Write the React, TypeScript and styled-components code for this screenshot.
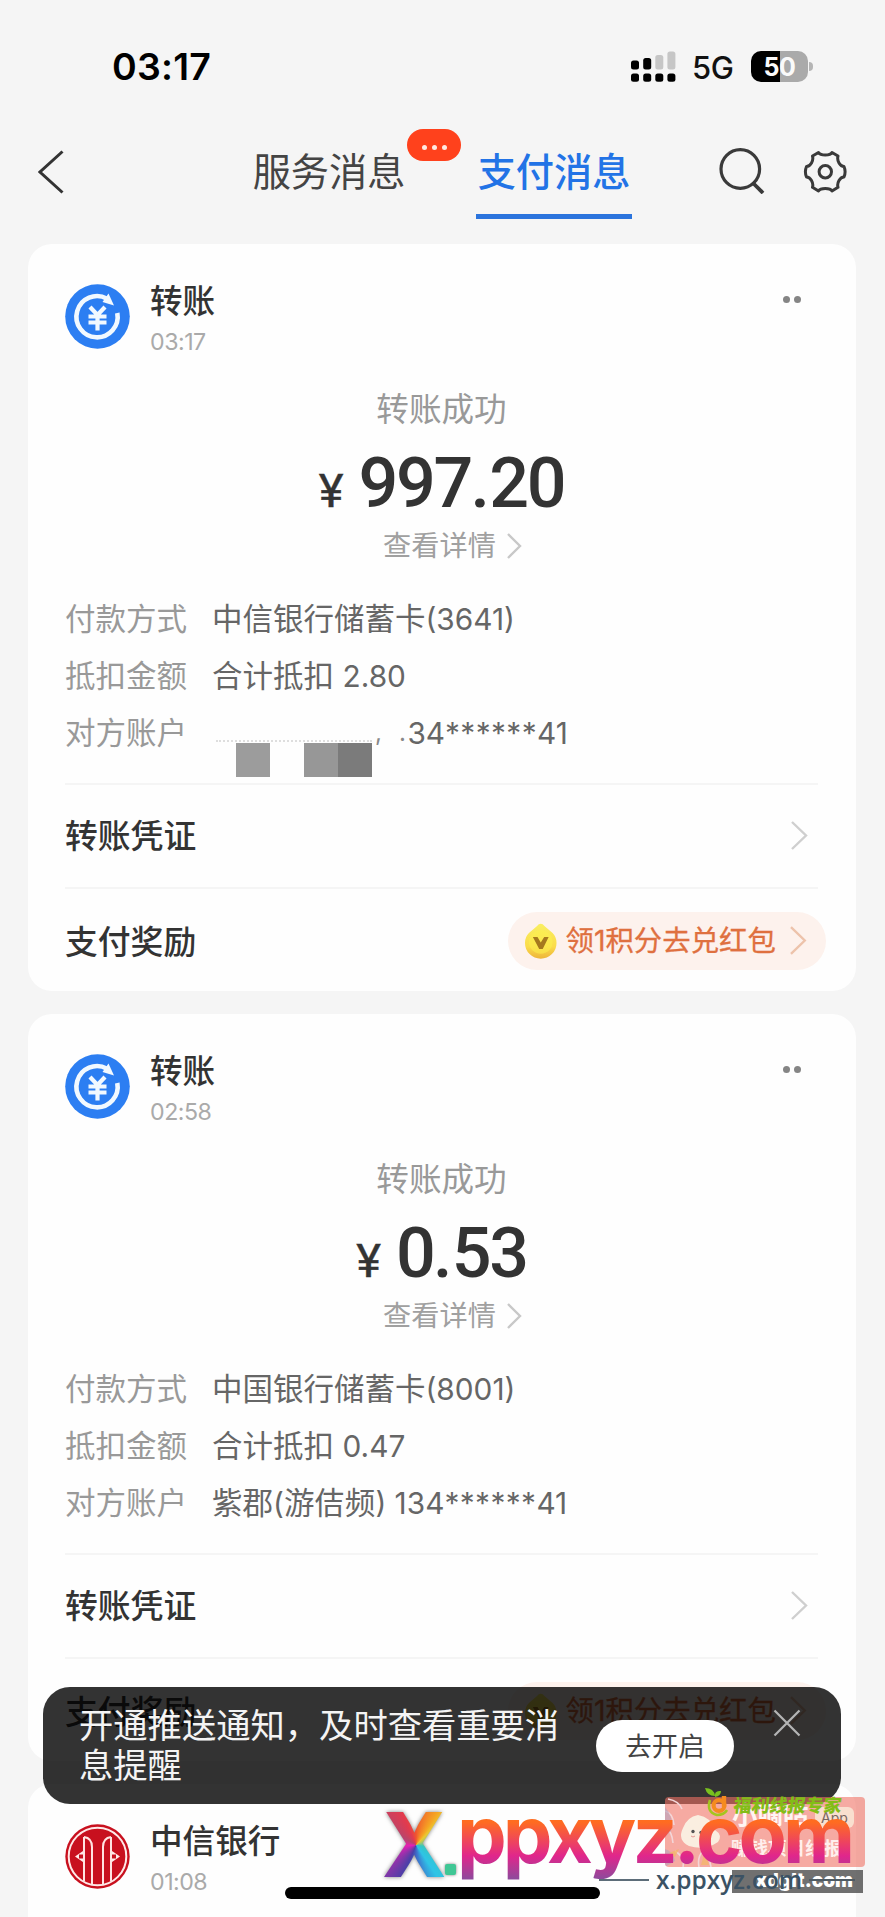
import React from "react";
import styled, { createGlobalStyle } from "styled-components";

const Global = createGlobalStyle`
  * { box-sizing: border-box; }
  body { margin: 0; background: #f5f5f5; }
`;

const Screen = styled.div`
  position: relative;
  width: 885px;
  height: 1917px;
  overflow: hidden;
  background: #f5f5f5;
  font-family: Inter, "Noto Sans CJK SC", sans-serif;
  color: #333;
`;

const StatusBar = styled.div`
  display: flex;
  align-items: center;
  height: 132px;
  padding: 0 72px 0 112px;
`;
const Clock = styled.div`
  flex: 1;
  font-size: 37.5px;
  font-weight: 600;
  letter-spacing: 0.2px;
  color: #000;
`;
const Signal = styled.svg`
  display: block;
  margin-right: 16px;
`;
const Network = styled.div`
  width: 59px;
  padding-top: 2px;
  font-size: 31px;
  font-weight: 500;
  letter-spacing: -0.4px;
  color: #111;
`;
const Battery = styled.div`
  display: flex;
  align-items: center;
  justify-content: center;
  width: 57px;
  height: 31px;
  padding-top: 1px;
  border-radius: 10px;
  background: linear-gradient(90deg, #000 51%, #aaa 51%);
  color: #fafafa;
  font-size: 25px;
  font-weight: 700;
  letter-spacing: -0.5px;
`;
const BatteryTip = styled.div`
  width: 4px;
  height: 9px;
  margin-left: 1px;
  border-radius: 0 4px 4px 0;
  background: #b5b5b5;
`;
const StatusIcons = styled.div`
  display: flex;
  align-items: center;
`;

const Nav = styled.div`
  display: flex;
  height: 112px;
  margin-top: -24px;
  padding: 24px 38px 0;
`;
const BackIcon = styled.svg`
  margin: 18px 0 0 0;
`;
const Tabs = styled.div`
  display: flex;
  margin-left: 187px;
`;
const Tab = styled.div<{ $active?: boolean }>`
  position: relative;
  width: 156px;
  height: 87px;
  margin-right: ${(p) => (p.$active ? 0 : 69)}px;
  font-size: 38.2px;
  line-height: 81px;
  text-align: center;
  white-space: nowrap;
  font-weight: ${(p) => (p.$active ? 500 : 400)};
  color: ${(p) => (p.$active ? "#2273e6" : "#444")};
  border-bottom: ${(p) => (p.$active ? "5px solid #2b74dd" : "0")};
`;
const TabBadge = styled.div`
  position: absolute;
  left: 156px;
  top: -3px;
  display: flex;
  align-items: center;
  justify-content: center;
  gap: 5px;
  width: 54px;
  height: 32px;
  padding-top: 4px;
  border-radius: 16px;
  background: #ff411c;
  i { width: 5px; height: 5px; border-radius: 50%; background: #ffe9e2; }
`;
const NavIcons = styled.div`
  display: flex;
  gap: 38px;
  margin: 16px 0 0 auto;
`;

const Cards = styled.div`
  display: flex;
  flex-direction: column;
  gap: 23px;
  margin: 24px 29px 0 28px;
`;
const CardBox = styled.section`
  flex: none;
  height: 747px;
  padding: 40px 38px 0 37px;
  border-radius: 24px;
  background: #fefefe;
`;
const Head = styled.div`
  display: flex;
  height: 65px;
`;
const Avatar = styled.svg`
  flex: none;
  width: 65px;
  height: 65px;
  margin-right: 20px;
`;
const HeadText = styled.div`
  flex: 1;
`;
const Title = styled.div`
  font-size: 32.6px;
  line-height: 34px;
  font-weight: 500;
`;
const Time = styled.div`
  margin-top: 12px;
  font-size: 23.2px;
  line-height: 24px;
  letter-spacing: -0.5px;
  color: #aaa;
`;
const More = styled.div`
  display: flex;
  gap: 4px;
  margin: 12px 17px 0 0;
  i { width: 7px; height: 7px; border-radius: 50%; background: #858585; }
`;
const Summary = styled.div`
  display: flex;
  flex-direction: column;
  align-items: center;
  padding-top: 40px;
`;
const Result = styled.div`
  font-size: 32.6px;
  line-height: 40px;
  color: #999;
`;
const Amount = styled.div`
  display: flex;
  align-items: baseline;
  height: 60px;
  margin-top: 23px;
  font-family: Roboto, sans-serif;
  font-size: 70px;
  line-height: 62px;
  font-weight: 500;
  letter-spacing: -2.3px;
  color: #333;
`;
const Point = styled.span`
  margin: 0 1.5px 0 -0.5px;
`;
const Yen = styled.span`
  margin-right: 15px;
  font-size: 47px;
  font-weight: 400;
  letter-spacing: 0;
  -webkit-text-stroke: 0.5px #333;
`;
const Detail = styled.div`
  display: flex;
  align-items: center;
  gap: 10px;
  margin: 18px 0 0 22px;
  font-size: 28.2px;
  line-height: 32px;
  color: #a0a0a0;
`;
const Facts = styled.div`
  margin: 28px 0 22px;
`;
const Fact = styled.div`
  display: flex;
  height: 57px;
  font-size: 30.5px;
  line-height: 57px;
  white-space: nowrap;
  color: #666;
`;
const FactLabel = styled.div`
  width: 147px;
  color: #999;
`;
const Num = styled.span`
  font-size: 29.8px;
  letter-spacing: 0;
`;
const Stars = styled.span`
  letter-spacing: 0.4px;
`;
const Mask = styled.span`
  position: relative;
  display: inline-block;
  width: 187px;
  height: 57px;
  vertical-align: top;
`;
const Residue = styled.span`
  position: absolute;
  left: 4px;
  top: 36px;
  width: 156px;
  border-top: 2px dotted #dedede;
`;
const Mosaic = styled.span<{ $x: number; $tone: string }>`
  position: absolute;
  left: ${(p) => p.$x}px;
  top: 39px;
  width: 34px;
  height: 34px;
  background: ${(p) => p.$tone};
`;
const MaskMark = styled.span<{ $x: number }>`
  position: absolute;
  left: ${(p) => p.$x}px;
  top: 0;
  font-size: 24px;
  color: #888;
`;
const LinkRow = styled.div<{ $last?: boolean }>`
  display: flex;
  align-items: center;
  justify-content: space-between;
  height: ${(p) => (p.$last ? 107 : 104)}px;
  padding-right: ${(p) => (p.$last ? 0 : 10)}px;
  margin-right: ${(p) => (p.$last ? -8 : 0)}px;
  font-size: 32.8px;
  line-height: 40px;
  font-weight: 500;
`;
const Rule = styled.div`
  height: 2px;
  margin-bottom: -2px;
  background: #f5f5f5;
`;
const Reward = styled.div`
  display: flex;
  align-items: center;
  width: 318px;
  height: 58px;
  padding: 0 19px 0 16px;
  border-radius: 29px;
  background: #fdf2ed;
  color: #df703f;
  font-size: 28.4px;
  font-weight: 400;
  -webkit-text-stroke: 0.3px #df703f;
  white-space: nowrap;
  span { width: 227px; margin-left: 8px; }
`;

const Toast = styled.div`
  position: absolute;
  left: 43px;
  top: 1687px;
  display: flex;
  width: 798px;
  height: 117px;
  padding: 19px 41px 0 36px;
  border-radius: 27px;
  background: rgba(0, 0, 0, 0.8);
`;
const ToastText = styled.div`
  flex: none;
  width: 484px;
  margin-right: 33px;
  font-size: 34.3px;
  line-height: 40px;
  color: #f4f4f4;
`;
const ToastButton = styled.div`
  flex: none;
  width: 138px;
  height: 52px;
  margin: 14px 39px 0 0;
  border-radius: 26px;
  background: #fff;
  color: #444;
  font-size: 26.5px;
  line-height: 52px;
  text-align: center;
`;
const CloseIcon = styled.svg`
  flex: none;
  margin-top: 3px;
`;
const HomeBar = styled.div`
  position: absolute;
  left: 285px;
  top: 1887px;
  width: 315px;
  height: 12px;
  border-radius: 6px;
  background: #000;
`;

const Banner = styled.div`
  position: absolute;
  left: 665px;
  top: 1797px;
  width: 200px;
  height: 70px;
  border-radius: 4px;
  overflow: hidden;
  background: rgba(240, 113, 100, 0.6);
`;
const BannerArt = styled.svg`
  position: absolute;
  left: 0;
  top: 0;
`;
const BannerTitle = styled.div`
  position: absolute;
  left: 67px;
  top: 2px;
  font-size: 25.5px;
  line-height: 32px;
  font-weight: 700;
  color: #fff5f2;
`;
const BannerSub = styled.div`
  position: absolute;
  left: 66px;
  top: 40px;
  font-size: 18.5px;
  line-height: 22px;
  font-weight: 700;
  color: #fff0ed;
  white-space: nowrap;
`;
const AppTag = styled.div`
  position: absolute;
  left: 150px;
  top: 10px;
  width: 39px;
  height: 21px;
  border-radius: 6px;
  background: #f9dfcf;
  color: #786661;
  font-size: 14px;
  line-height: 22px;
  text-align: center;
`;
const Sponsor = styled.div`
  position: absolute;
  left: 704px;
  top: 1787px;
  display: flex;
  width: 150px;
  height: 30px;
`;
const SponsorName = styled.div`
  margin-left: 2px;
  padding-top: 9px;
  font-size: 18px;
  line-height: 20px;
  font-weight: 900;
  transform: skewX(-7deg);
  color: #83bd17;
  white-space: nowrap;
`;
const SiteTag = styled.div`
  position: absolute;
  left: 732px;
  top: 1870px;
  width: 131px;
  height: 23px;
  padding-right: 10px;
  background: rgba(80, 80, 80, 0.82);
  color: #fff;
  font-size: 19px;
  line-height: 22px;
  font-weight: 900;
  text-align: right;
`;
const SmallSite = styled.div`
  position: absolute;
  left: 599px;
  top: 1865px;
  display: flex;
  align-items: center;
  gap: 7px;
  height: 30px;
  font-family: "Open Sans", "Noto Sans", sans-serif;
  font-size: 24.5px;
  line-height: 30px;
  font-weight: 600;
  color: #3b5264;
  &::before { content: ""; width: 50px; height: 2px; background: #5c6d79; }
  &::after { content: ""; width: 46px; height: 2px; background: #4e5b64; }
`;
const BigX = styled.div`
  position: absolute;
  left: 382px;
  top: 1797px;
  width: 70px;
  font-size: 89px;
  line-height: 96px;
  font-weight: 800;
  color: transparent;
  transform: scaleX(0.95);
  transform-origin: 0 0;
  background: conic-gradient(from 0deg at 36px 48px, #f0562e 0deg, #f5a623 35deg, #e9c832 45deg, #35c6c0 100deg, #2fc4e6 145deg, #3b7bd0 170deg, #4a3fa8 205deg, #7b38a8 225deg, #e61fb4 265deg, #b8456c 300deg, #e23a4e 335deg, #f0562e 360deg);
  -webkit-background-clip: text;
  background-clip: text;
  filter: drop-shadow(0 0 2px rgba(40, 40, 40, 0.6));
`;
const XDot = styled.div`
  position: absolute;
  left: 445px;
  top: 1864px;
  width: 11px;
  height: 11px;
  border-radius: 2px;
  background: #40c795;
  box-shadow: 0 0 3px #777;
`;
const BigSite = styled.div`
  position: absolute;
  left: 457px;
  top: 1786px;
  width: 410px;
  height: 104px;
  font-size: 79px;
  line-height: 96px;
  font-weight: 700;
  letter-spacing: -4px;
  white-space: nowrap;
  color: transparent;
  background: linear-gradient(180deg, #ff6c20 36px, #f55445 48px, #e0268c 70px, #8e4a9c 93px);
  -webkit-background-clip: text;
  background-clip: text;
`;

const RowName = styled.div`
  padding-top: 2px;
`;

function Chevron({ w, h, color }: { w: number; h: number; color: string }) {
  return (
    <svg width={w + 4} height={h + 4} viewBox={`-2 -2 ${w + 4} ${h + 4}`} fill="none">
      <path d={`M0 0 L${w} ${h / 2} L0 ${h}`} stroke={color} strokeWidth="2.4" />
    </svg>
  );
}

function Coin() {
  return (
    <svg width="34" height="38" viewBox="0 0 34 38">
      <defs>
        <linearGradient id="coin" x1="0" y1="0" x2="0" y2="1">
          <stop offset="0" stopColor="#f9ef62" />
          <stop offset="0.65" stopColor="#fbdc4a" />
          <stop offset="1" stopColor="#edb43a" />
        </linearGradient>
      </defs>
      <path d="M17 1.5Q19 1.5 21 4L29 11Q33 15 33 21A16 16 0 0 1 1 21Q1 15 5 11L13 4Q15 1.5 17 1.5Z" fill="url(#coin)" />
      <circle cx="17" cy="20" r="12" fill="#fbf04e" opacity="0.55" />
      <path d="M9 15H13.7L17 20.5L20.5 15H25L19 27H15.4Z" fill="#a5791e" />
    </svg>
  );
}

function TransferAvatar() {
  return (
    <Avatar viewBox="0 0 65 65" fill="none">
      <circle cx="32.5" cy="32.5" r="32.3" fill="#2c7ef2" />
      <path d="M52.3 29A20.6 20.6 0 1 1 42 14.7" stroke="#f2f9ff" strokeWidth="4.6" />
      <path d="M43.5 9.5L49 21.5L37.5 18Z" fill="#f2f9ff" />
      <path d="M25 23L32.5 31L40 23M23.5 32.5H41.5M23.5 38.5H41.5M32.5 31V46.5" stroke="#f2f9ff" strokeWidth="4.2" />
    </Avatar>
  );
}

function BankAvatar() {
  return (
    <Avatar viewBox="0 0 65 65" fill="none">
      <circle cx="32.5" cy="32.5" r="32.2" fill="#c8101e" />
      <circle cx="32.5" cy="32.5" r="28.8" stroke="#ffe9e8" strokeWidth="2" />
      <path d="M19 13Q27 14 27 23V60.5M46 13Q38 14 38 23V60.5M19 13V57M46 13V57" stroke="#ffe3e1" strokeWidth="2" />
      <path d="M18 27L10 32.5L18 38V34.5H14V30.5H18ZM47 27L55 32.5L47 38V34.5H51V30.5H47Z" fill="#ffe9e8" />
    </Avatar>
  );
}

type CardProps = { time: string; amount: string; method: string; card: string; discount: string; masked?: boolean };

function TransferCard({ time, amount, method, card, discount, masked }: CardProps) {
  const [whole, cents] = amount.split(".");
  return (
    <CardBox>
      <Head>
        <TransferAvatar />
        <HeadText>
          <Title>转账</Title>
          <Time>{time}</Time>
        </HeadText>
        <More><i /><i /></More>
      </Head>
      <Summary>
        <Result>转账成功</Result>
        <Amount><Yen>¥</Yen><span>{whole}<Point>.</Point>{cents}</span></Amount>
        <Detail>查看详情<Chevron w={12} h={24} color="#c8c8c8" /></Detail>
      </Summary>
      <Facts>
        <Fact><FactLabel>付款方式</FactLabel><div>{method}<Num>{card}</Num></div></Fact>
        <Fact><FactLabel>抵扣金额</FactLabel><div>合计抵扣 <Num>{discount}</Num></div></Fact>
        <Fact>
          <FactLabel>对方账户</FactLabel>
          {masked ? (
            <div>
              <Mask>
                <Residue />
                <Mosaic $x={24} $tone="#9c9c9c" />
                <Mosaic $x={92} $tone="#979797" />
                <Mosaic $x={126} $tone="#7b7b7b" />
                <MaskMark $x={163}>,</MaskMark>
                <MaskMark $x={187}>.</MaskMark>
              </Mask>
              <Num>&nbsp;34<Stars>******</Stars>41</Num>
            </div>
          ) : (
            <div>紫郡<Num>(</Num>游佶频<Num>) 134<Stars>******</Stars>41</Num></div>
          )}
        </Fact>
      </Facts>
      <Rule />
      <LinkRow><RowName>转账凭证</RowName><Chevron w={14} h={27} color="#cfcfcf" /></LinkRow>
      <Rule />
      <LinkRow $last>
        <RowName>支付奖励</RowName>
        <Reward><Coin /><span>领1积分去兑红包</span><Chevron w={14} h={27} color="#edc3ab" /></Reward>
      </LinkRow>
    </CardBox>
  );
}

export default function App() {
  return (
    <Screen>
      <Global />
      <StatusBar>
        <Clock>03:17</Clock>
        <StatusIcons>
          <Signal width="45" height="31" viewBox="0 0 45 31">
            {[0, 12.2, 24.3, 36.4].map((x) => <rect key={x} x={x} y="22.5" width="8" height="8.3" rx="2.5" fill="#000" />)}
            <rect x="0" y="9.5" width="8" height="9" rx="2.5" fill="#000" />
            <rect x="12.2" y="7" width="8" height="11.5" rx="2.5" fill="#000" />
            <rect x="24.3" y="4" width="8" height="14.5" rx="2.5" fill="#c6c6c6" />
            <rect x="36.4" y="0.5" width="8" height="18" rx="2.5" fill="#c6c6c6" />
          </Signal>
          <Network>5G</Network>
          <Battery>50</Battery>
          <BatteryTip />
        </StatusIcons>
      </StatusBar>
      <Nav>
        <BackIcon width="26" height="44" viewBox="0 0 26 44" fill="none">
          <path d="M24.5 1.5L2 22L24.5 42.5" stroke="#333" strokeWidth="3" />
        </BackIcon>
        <Tabs>
          <Tab>服务消息<TabBadge><i /><i /><i /></TabBadge></Tab>
          <Tab $active>支付消息</Tab>
        </Tabs>
        <NavIcons>
          <svg width="46" height="46" viewBox="0 0 46 46" fill="none" stroke="#3a3a3a" strokeWidth="3.2">
            <circle cx="21.3" cy="21" r="19.3" />
            <path d="M34 35L44 45" strokeWidth="3.8" />
          </svg>
          <svg width="44" height="46" viewBox="0 0 44 46" fill="none" stroke="#3a3a3a" strokeWidth="3" strokeLinejoin="round">
            <path d="M15.5 4.5Q17 7 22.3 7Q27.6 7 29 4.5L35 8Q34 11.5 36 15Q38 18.5 41 18.5Q43.2 23.7 41 29Q38 29 36 32.5Q34 36 35 39.3L29 43Q27.6 40.5 22.3 40.5Q17 40.5 15.5 43L9.5 39.3Q10.5 36 8.5 32.5Q6.5 29 3.5 29Q1.3 23.7 3.5 18.5Q6.5 18.5 8.5 15Q10.5 11.5 9.5 8Z" />
            <circle cx="22.3" cy="23.7" r="6.2" />
          </svg>
        </NavIcons>
      </Nav>
      <Cards>
        <TransferCard time="03:17" amount="997.20" method="中信银行储蓄卡" card="(3641)" discount="2.80" masked />
        <TransferCard time="02:58" amount="0.53" method="中国银行储蓄卡" card="(8001)" discount="0.47" />
        <CardBox>
          <Head>
            <BankAvatar />
            <HeadText>
              <Title>中信银行</Title>
              <Time>01:08</Time>
            </HeadText>
          </Head>
        </CardBox>
      </Cards>
      <Toast>
        <ToastText>开通推送通知，及时查看重要消息提醒</ToastText>
        <ToastButton>去开启</ToastButton>
        <CloseIcon width="28" height="28" viewBox="0 0 28 28" fill="none">
          <path d="M1.5 1.5L26.5 26.5M26.5 1.5L1.5 26.5" stroke="#b5b5b5" strokeWidth="2.2" />
        </CloseIcon>
      </Toast>
      <HomeBar />
      <Banner>
        <BannerArt width="66" height="70" viewBox="0 0 66 70" fill="none">
          <path d="M0 14Q8 16 9 28M0 30Q7 34 8 46M3 2Q14 4 17 12M34 70Q32 60 38 54M46 70Q44 60 40 54M18 70Q20 60 10 54" stroke="#f3d6d8" strokeWidth="1.6" />
          <path d="M0 10Q9 20 6 34L0 40ZM0 52Q8 54 10 64L0 70Z" fill="#b9a3bd" opacity="0.65" />
          <path d="M36 68L40 54L44 68ZM48 66L44 54L54 62ZM4 56L14 52L10 60Z" fill="#f4b76c" opacity="0.8" />
          <path d="M33 18Q46 20 50 33Q58 38 53 45Q40 54 24 49Q12 43 18 31Q22 20 33 18Z" fill="#faeee0" />
          <circle cx="28" cy="34.5" r="1.7" fill="#555" />
          <circle cx="36" cy="35.5" r="1.7" fill="#555" />
          <path d="M26 39Q28 41 30 39" stroke="#e49a94" />
        </BannerArt>
        <BannerTitle>小嘀咕</BannerTitle>
        <AppTag>App</AppTag>
        <BannerSub>赚钱项目线报</BannerSub>
      </Banner>
      <Sponsor>
        <svg width="28" height="30" viewBox="0 0 28 30" fill="none">
          <path d="M1 1Q10 1 11 9Q3 9 1 1ZM11 10Q10 3 17 4Q17 9 11 10Z" fill="#79c11e" />
          <path d="M6 13Q2 25 13 28Q20 28 23 23" stroke="#a4c51e" strokeWidth="2.6" />
          <path d="M20 9V20" stroke="#f58b1f" strokeWidth="4.4" />
          <circle cx="15" cy="18.5" r="5.4" stroke="#f58b1f" strokeWidth="4.2" />
        </svg>
        <SponsorName>福利线报专家</SponsorName>
      </Sponsor>
      <SiteTag>xdglt.com</SiteTag>
      <SmallSite>x.ppxyz.com</SmallSite>
      <BigX>X</BigX>
      <XDot />
      <BigSite>ppxyz.com</BigSite>
    </Screen>
  );
}
